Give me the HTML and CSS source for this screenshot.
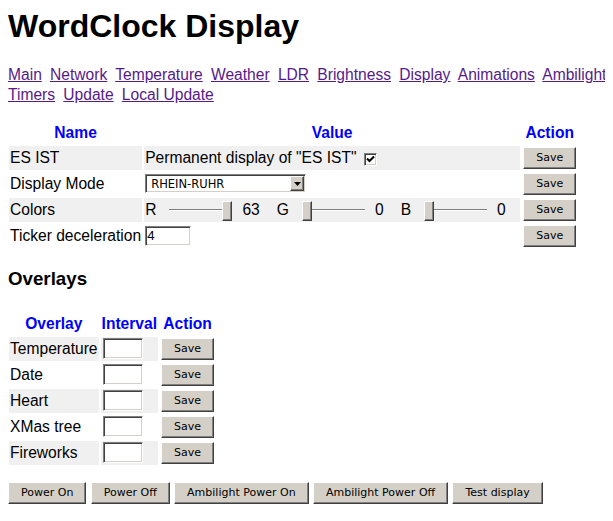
FILE: index.html
```html
<!DOCTYPE html>
<html>
<head>
<meta charset="utf-8">
<title>WordClock Display</title>
<link rel="stylesheet" href="styles.css">
</head>
<body>
<h1>WordClock Display</h1>
<p class="nav"><a href="#">Main</a> <a href="#">Network</a> <a href="#">Temperature</a> <a href="#">Weather</a> <a href="#">LDR</a> <a href="#">Brightness</a> <a href="#">Display</a> <a href="#">Animations</a> <a href="#">Ambilight</a><br><a href="#">Timers</a> <a href="#">Update</a> <a href="#">Local Update</a></p>

<table class="settings">
  <tr>
    <th>Name</th>
    <th class="value-head">Value</th>
    <th>Action</th>
  </tr>
  <tr class="shade">
    <td class="c-name">ES IST</td>
    <td class="c-val">Permanent display of "ES IST"<span class="cb"><svg width="9" height="9" viewBox="0 0 9 9"><path d="M1 3.5 L3.5 6 L8 1.5" fill="none" stroke="#000" stroke-width="2"/></svg></span></td>
    <td><button class="btn">Save</button></td>
  </tr>
  <tr>
    <td class="c-name">Display Mode</td>
    <td class="c-val"><span class="selwrap"><select class="sel"><option>RHEIN-RUHR</option></select><span class="selbtn"><svg width="7" height="4" viewBox="0 0 7 4"><path d="M0 0H7L3.5 4Z" fill="#000"/></svg></span></span></td>
    <td><button class="btn">Save</button></td>
  </tr>
  <tr class="shade">
    <td class="c-name">Colors</td>
    <td class="c-val">
      <div class="colors">
        <span class="clabel">R</span><input class="slider" type="range" min="0" max="63" value="63"><span class="cval">63</span>
        <span class="clabel">G</span><input class="slider" type="range" min="0" max="63" value="0"><span class="cval">0</span>
        <span class="clabel">B</span><input class="slider" type="range" min="0" max="63" value="0"><span class="cval">0</span>
      </div>
    </td>
    <td><button class="btn">Save</button></td>
  </tr>
  <tr>
    <td class="c-name">Ticker deceleration</td>
    <td class="c-val"><input class="tinput ticker" type="text" value="4"></td>
    <td><button class="btn">Save</button></td>
  </tr>
</table>

<h3>Overlays</h3>

<table class="overlays">
  <tr>
    <th>Overlay</th>
    <th>Interval</th>
    <th>Action</th>
  </tr>
  <tr class="shade">
    <td class="c-name">Temperature</td>
    <td class="c-val"><input class="tinput interval" type="text"></td>
    <td><button class="btn">Save</button></td>
  </tr>
  <tr>
    <td class="c-name">Date</td>
    <td class="c-val"><input class="tinput interval" type="text"></td>
    <td><button class="btn">Save</button></td>
  </tr>
  <tr class="shade">
    <td class="c-name">Heart</td>
    <td class="c-val"><input class="tinput interval" type="text"></td>
    <td><button class="btn">Save</button></td>
  </tr>
  <tr>
    <td class="c-name">XMas tree</td>
    <td class="c-val"><input class="tinput interval" type="text"></td>
    <td><button class="btn">Save</button></td>
  </tr>
  <tr class="shade">
    <td class="c-name">Fireworks</td>
    <td class="c-val"><input class="tinput interval" type="text"></td>
    <td><button class="btn">Save</button></td>
  </tr>
</table>

<div class="power">
  <button class="btn">Power On</button>
  <button class="btn">Power Off</button>
  <button class="btn">Ambilight Power On</button>
  <button class="btn">Ambilight Power Off</button>
  <button class="btn">Test display</button>
</div>
</body>
</html>
```

FILE: styles.css
```css
body {
  margin: 8px;
  font-family: "Liberation Sans", Arial, sans-serif;
  font-size: 15.6px;
  color: #000;
  background: #fff;
}

h1 {
  font-size: 32px;
  line-height: 36.8px;
  font-weight: bold;
  margin: 0 0 20.5px;
}

.nav {
  margin: 0 0 16px;
  line-height: 20px;
  white-space: nowrap;
}

.nav a {
  color: #551a8b;
  margin-right: 3.9px;
}

table {
  border-spacing: 2px;
  margin-left: -1px;
}

th {
  color: #0000ff;
  font-weight: bold;
  padding: 1px;
  line-height: 18.4px;
}

td {
  padding: 1px;
  vertical-align: middle;
}

.shade .c-name,
.shade .c-val {
  background: #f0f0f0;
}

.value-head {
  width: 374px;
}

.c-name {
  white-space: nowrap;
}

.btn {
  font-family: "DejaVu Sans", Tahoma, sans-serif;
  font-size: 11px;
  height: 22px;
  padding: 0 12px;
  margin: 0;
  background: #d4d0c8;
  color: #000;
  border: 1px solid;
  border-color: #fff #404040 #404040 #fff;
  box-shadow: inset -1px -1px 0 #808080;
  box-sizing: border-box;
  vertical-align: top;
  border-radius: 0;
}

.cb {
  display: inline-flex;
  align-items: center;
  justify-content: center;
  width: 13px;
  height: 13px;
  box-sizing: border-box;
  margin-left: 8px;
  background: #fff;
  border: 1px solid;
  border-color: #808080 #fff #fff #808080;
  box-shadow: inset 1px 1px 0 #404040, inset -1px -1px 0 #d4d0c8;
  vertical-align: -1px;
}

.selwrap {
  position: relative;
  display: inline-block;
  vertical-align: middle;
}

.sel {
  appearance: none;
  -webkit-appearance: none;
  display: block;
  width: 161px;
  height: 19px;
  box-sizing: border-box;
  margin: 0;
  padding: 0 0 0 5px;
  background: #fff;
  border: 1px solid;
  border-color: #808080 #fff #fff #808080;
  box-shadow: inset 1px 1px 0 #404040, inset -1px -1px 0 #d4d0c8;
  border-radius: 0;
  font-family: "DejaVu Sans", Tahoma, sans-serif;
  font-size: 11.5px;
  color: #000;
}

.selbtn {
  position: absolute;
  top: 2px;
  right: 2px;
  bottom: 2px;
  width: 14px;
  display: flex;
  align-items: center;
  justify-content: center;
  background: #d4d0c8;
  border: 1px solid;
  border-color: #fff #404040 #404040 #fff;
  box-shadow: inset -1px -1px 0 #808080;
  box-sizing: border-box;
}

.colors {
  display: flex;
  align-items: center;
}

.clabel {
  margin-right: 13px;
}

.cval {
  margin-right: 17px;
}

.cval:last-child {
  margin-right: 0;
}

.slider {
  -webkit-appearance: none;
  appearance: none;
  width: 63px;
  height: 20px;
  margin: 0 10px 0 0;
  padding: 0;
  background: transparent;
}

.slider::-webkit-slider-runnable-track {
  height: 2px;
  background: #a0a0a0;
  border-top: 1px solid #808080;
  border-bottom: 1px solid #fff;
}

.slider::-webkit-slider-thumb {
  -webkit-appearance: none;
  appearance: none;
  width: 10px;
  height: 20px;
  margin-top: -9px;
  box-sizing: border-box;
  background: #d4d0c8;
  border: 1px solid;
  border-color: #fff #404040 #404040 #fff;
  box-shadow: inset -1px -1px 0 #808080;
  border-radius: 0;
}

.tinput {
  box-sizing: border-box;
  margin: 0;
  padding: 0 1px;
  background: #fff;
  border: 1px solid;
  border-color: #808080 #fff #fff #808080;
  box-shadow: inset 1px 1px 0 #404040, inset -1px -1px 0 #d4d0c8;
  border-radius: 0;
  font-family: "Liberation Sans", Arial, sans-serif;
  font-size: 13.33px;
  color: #000;
  vertical-align: middle;
}

.ticker {
  width: 46px;
  height: 20px;
}

.interval {
  width: 40px;
  height: 21px;
  margin-left: 1px;
}

h3 {
  font-size: 18.72px;
  line-height: 21.5px;
  margin: 18.7px 0 22.4px;
}

.power {
  margin-top: 15px;
}
```
